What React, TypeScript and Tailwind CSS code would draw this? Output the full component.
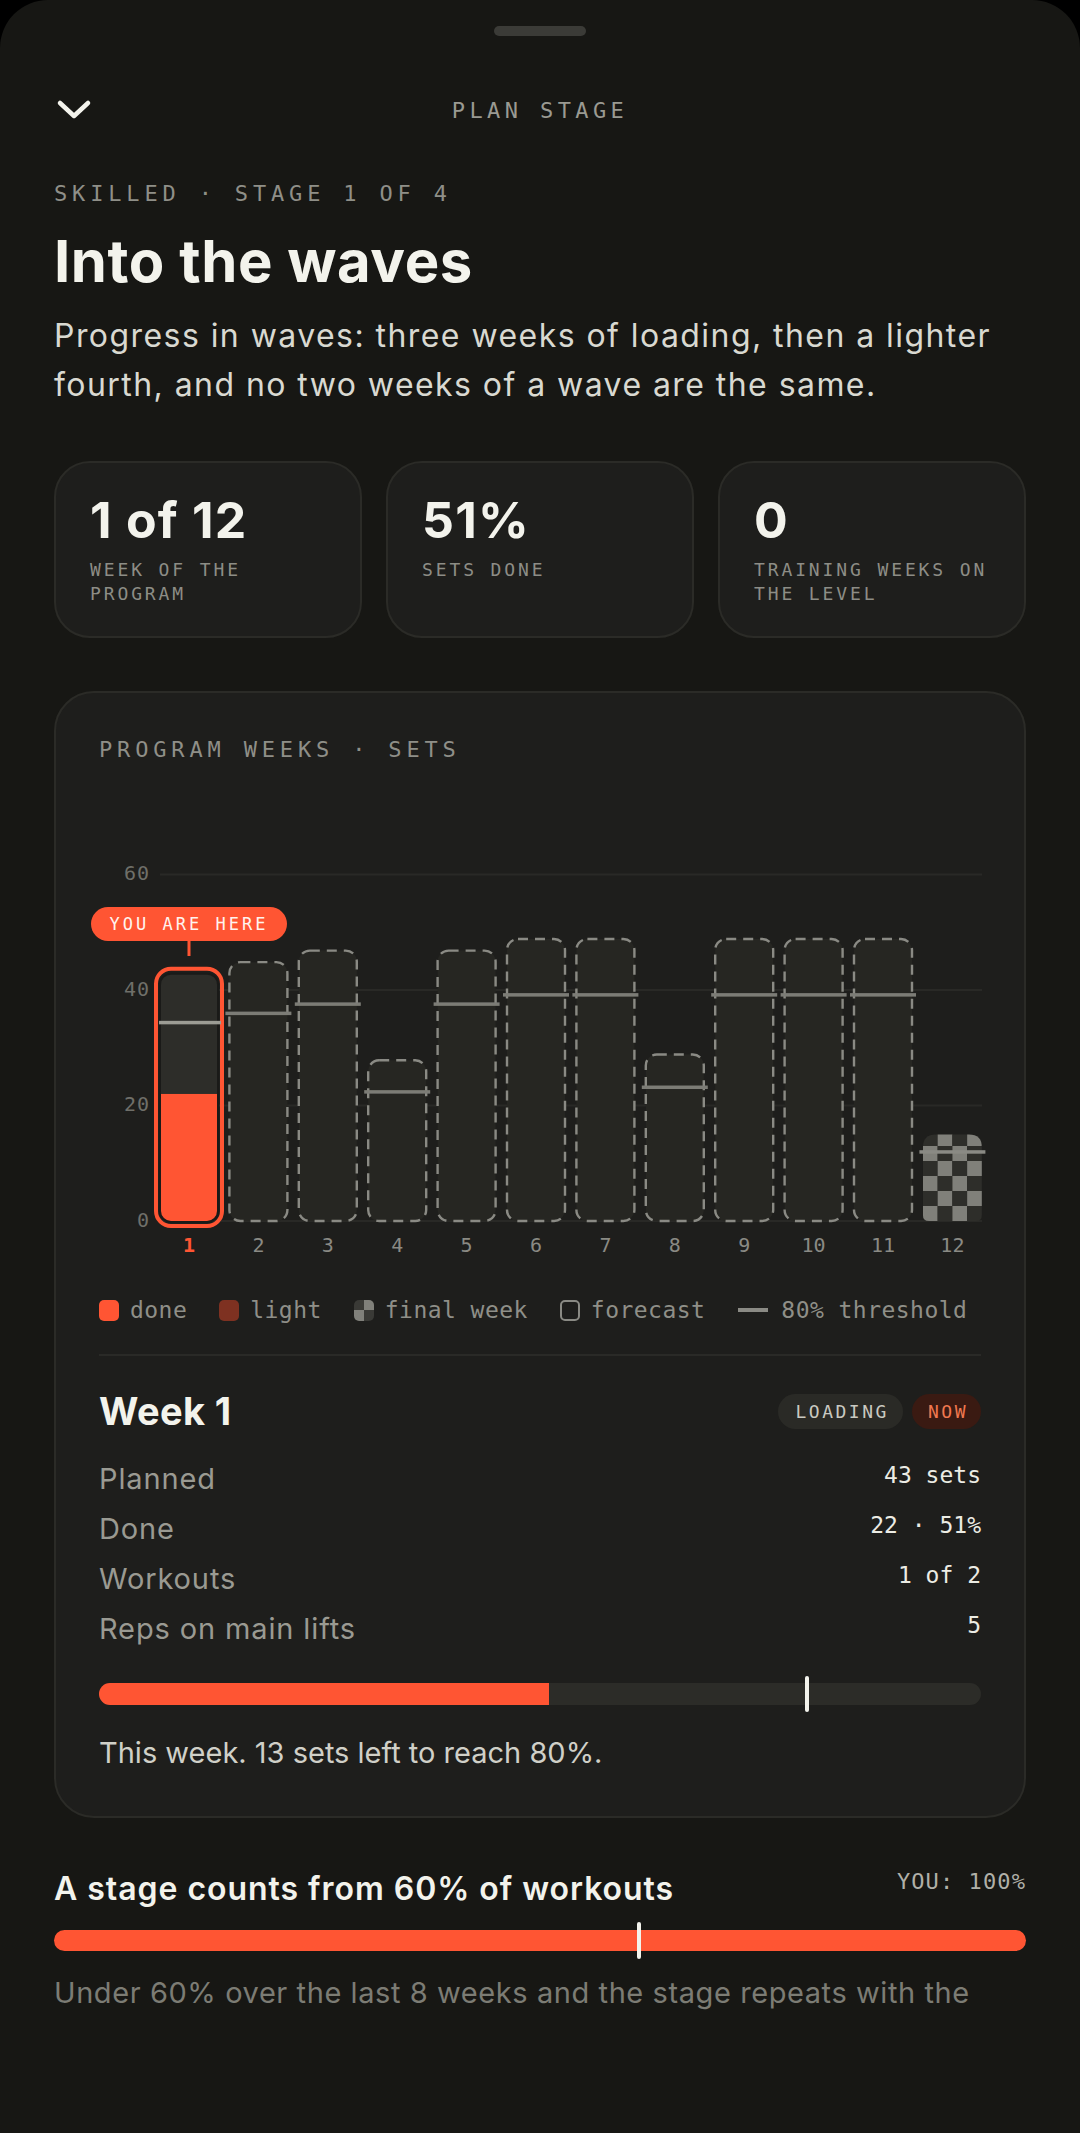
import React from "react";

const SANS = "font-['Inter','Noto_Sans',sans-serif]";
const MONO = "font-['DejaVu_Sans_Mono','Liberation_Mono',monospace]";

const ORANGE = "#ff5533";

const weeks = [
  { v: 43, kind: "current" },
  { v: 45, kind: "forecast" },
  { v: 47, kind: "forecast" },
  { v: 28, kind: "forecast" },
  { v: 47, kind: "forecast" },
  { v: 49, kind: "forecast" },
  { v: 49, kind: "forecast" },
  { v: 29, kind: "forecast" },
  { v: 49, kind: "forecast" },
  { v: 49, kind: "forecast" },
  { v: 49, kind: "forecast" },
  { v: 15, kind: "final" },
];

function Chart() {
  // svg origin = page (99, 860)
  const base = 361;
  const k = 5.775;
  const y = (v: number) => base - v * k;
  const cx = (i: number) => 90 + i * 69.4;
  const bw = 60;
  const mono = "DejaVu Sans Mono, Liberation Mono, monospace";
  return (
    <svg width="883" height="410" viewBox="0 0 883 410" overflow="visible" className="block">
      {[0, 20, 40, 60].map((g) => (
        <g key={g}>
          <line x1="61" x2="883" y1={y(g)} y2={y(g)} stroke="#292926" strokeWidth="2" />
          <text x="51" y={y(g)} textAnchor="end" dominantBaseline="middle" fill="#6f6f69" fontSize="20" fontFamily={mono} letterSpacing="1">
            {g}
          </text>
        </g>
      ))}
      {weeks.map((w, i) => {
        const c = cx(i);
        const top = y(w.v);
        const thr = y(w.v * 0.8);
        if (w.kind === "current") {
          const doneTop = y(22);
          return (
            <g key={i}>
              <rect x={c - 33} y={top - 4} width="66" height={base + 5 - top + 4} rx="15" fill="none" stroke={ORANGE} strokeWidth="4" />
              <clipPath id="cb1">
                <rect x={c - 29} y={top + 1} width="58" height={base - top} rx="11" />
              </clipPath>
              <g clipPath="url(#cb1)">
                <rect x={c - 29} y={top} width="58" height={base - top + 2} fill="#2d2d29" />
                <rect x={c - 29} y={doneTop} width="58" height={base - doneTop + 2} fill={ORANGE} />
              </g>
              <rect x={c - 29} y={top + 1} width="58" height={base - top} rx="11" fill="none" stroke="#1a1a18" strokeWidth="2" />
              <rect x={c - 30} y={thr - 1.5} width="62" height="3.5" fill="#9c9c94" />
              <line x1={c} x2={c} y1="80" y2="96" stroke={ORANGE} strokeWidth="3" />
              <rect x={c - 98} y="47" width="196" height="34" rx="17" fill={ORANGE} />
              <text x={c} y="65" textAnchor="middle" dominantBaseline="middle" fill="#fff3ee" fontSize="17" fontFamily={mono} letterSpacing="3">
                YOU ARE HERE
              </text>
            </g>
          );
        }
        if (w.kind === "final") {
          const x0 = c - 29.5;
          const cells: React.ReactNode[] = [];
          for (let r = 0; r < 6; r++) {
            for (let col = 0; col < 4; col++) {
              const light = (r + col) % 2 === 0;
              cells.push(
                <rect key={`${r}-${col}`} x={x0 + col * 14.75} y={base - (r + 1) * 15} width="14.75" height="15" fill={light ? "#80807a" : "#2e2e2a"} />
              );
            }
          }
          return (
            <g key={i}>
              <clipPath id="cb12">
                <path d={`M${x0} ${top + 13} Q${x0} ${top} ${x0 + 13} ${top} L${x0 + 46} ${top} Q${x0 + 59} ${top} ${x0 + 59} ${top + 13} L${x0 + 59} ${base - 6} Q${x0 + 59} ${base} ${x0 + 53} ${base} L${x0 + 6} ${base} Q${x0} ${base} ${x0} ${base - 6} Z`} />
              </clipPath>
              <g clipPath="url(#cb12)">{cells}</g>
              <rect x={c - 33} y={thr - 1.5} width="66" height="3.5" fill="#8a8a84" />
            </g>
          );
        }
        return (
          <g key={i}>
            <rect x={c - bw / 2 + 1} y={top + 1} width={bw - 2} height={base - top - 1} rx="11" fill="#262622" stroke="#8a8a84" strokeWidth="2.4" strokeDasharray="10 7" />
            <rect x={c - 33} y={thr - 1.5} width="66" height="3.5" fill="#7c7c76" />
          </g>
        );
      })}
      {weeks.map((_, i) => (
        <text
          key={i}
          x={cx(i)}
          y="386"
          textAnchor="middle"
          dominantBaseline="middle"
          fill={i === 0 ? ORANGE : "#8a8a84"}
          fontWeight={i === 0 ? 700 : 400}
          fontSize="20"
          fontFamily={mono}
        >
          {i + 1}
        </text>
      ))}
    </svg>
  );
}

function Stat({ value, label }: { value: string; label: React.ReactNode }) {
  return (
    <div className="h-[177px] rounded-[36px] border-2 border-[#2b2b27] bg-[#1e1e1c] pl-[34px] pr-[22px] pt-[28px]">
      <div className={`${SANS} text-[50px] font-bold leading-[58px] tracking-[0.025em] text-[#f3f3ec]`}>{value}</div>
      <div className={`${MONO} mt-[9px] text-[18px] leading-[24px] tracking-[0.16em] text-[#8d8d86]`}>{label}</div>
    </div>
  );
}

function Legend() {
  return (
    <div className={`${MONO} mt-[24px] flex items-center text-[23px] leading-[32px] tracking-[0.02em] text-[#8f8f88]`}>
      <span className="h-[21px] w-[20px] rounded-[5px] bg-[#ff5533]" />
      <span className="ml-[11px]">done</span>
      <span className="ml-[32px] h-[21px] w-[20px] rounded-[5px] bg-[#7e3121]" />
      <span className="ml-[11px]">light</span>
      <span className="ml-[32px] grid h-[21px] w-[20px] grid-cols-2 grid-rows-2 overflow-hidden rounded-[5px]">
        <span className="bg-[#3a3a36]" />
        <span className="bg-[#80807a]" />
        <span className="bg-[#80807a]" />
        <span className="bg-[#3a3a36]" />
      </span>
      <span className="ml-[11px]">final week</span>
      <span className="ml-[32px] h-[21px] w-[20px] rounded-[5px] border-2 border-[#8a8a84]" />
      <span className="ml-[11px]">forecast</span>
      <span className="ml-[33px] h-[4px] w-[30px] bg-[#8a8a84]" />
      <span className="ml-[13px]">80% threshold</span>
    </div>
  );
}

function Row({ label, value }: { label: string; value: string }) {
  return (
    <div className="flex items-start justify-between">
      <span className={`${SANS} text-[29px] leading-[40px] tracking-[0.03em] text-[#9a9a92]`}>{label}</span>
      <span className={`${MONO} text-[23px] leading-[32px] text-[#ecece4]`}>{value}</span>
    </div>
  );
}

export default function App() {
  return (
    <div className="min-h-screen bg-black">
      <div className="relative min-h-[2133px] overflow-hidden rounded-t-[48px] bg-[#171714]">
        <div className="flex justify-center pt-[26px]">
          <div className="h-[10px] w-[92px] rounded-full bg-[#3b3b37]" />
        </div>
        <div className="mt-[44px] flex h-[60px] items-center justify-between px-[54px]">
          <svg width="36" height="22" viewBox="0 0 36 22" className="ml-[2px]">
            <polyline points="4,4 18,17 32,4" fill="none" stroke="#f3f3ec" strokeWidth="4.5" strokeLinecap="round" strokeLinejoin="round" />
          </svg>
          <div className={`${MONO} text-[22px] tracking-[0.2em] text-[#9a9a92]`}>PLAN STAGE</div>
          <div className="w-[38px]" />
        </div>

        <div className="px-[54px]">
          <div className={`${MONO} mt-[37px] text-[22px] leading-[33px] tracking-[0.22em] text-[#8f8f88]`}>
            SKILLED · STAGE 1 OF 4
          </div>
          <h1 className={`${SANS} mt-[18px] text-[58px] font-bold leading-[66px] tracking-[0.01em] text-[#f3f3ec]`}>
            Into the waves
          </h1>
          <p className={`${SANS} mt-[17px] text-[32px] leading-[49px] tracking-[0.045em] text-[#d9d9d1]`}>
            Progress in waves: three weeks of loading, then a lighter fourth, and no two weeks of a wave are the same.
          </p>

          <div className="mt-[52px] grid grid-cols-3 gap-[24px]">
            <Stat value="1 of 12" label={<>WEEK OF THE<br />PROGRAM</>} />
            <Stat value="51%" label="SETS DONE" />
            <Stat value="0" label="TRAINING WEEKS ON THE LEVEL" />
          </div>

          <div className="mt-[53px] rounded-[40px] border-2 border-[#2b2b27] bg-[#1e1e1c] px-[43px] pb-[43px] pt-[40px]">
            <div className={`${MONO} text-[22px] leading-[33px] tracking-[0.22em] text-[#8f8f88]`}>PROGRAM WEEKS · SETS</div>
            <div className="mt-[94px]">
              <Chart />
            </div>
            <Legend />
            <div className="mt-[28px] h-[2px] bg-[#2a2a27]" />
            <div className="mt-[33px] flex items-center justify-between">
              <div className={`${SANS} text-[38px] font-bold leading-[44px] tracking-[0.01em] text-[#f3f3ec]`}>Week 1</div>
              <div className={`${MONO} flex items-center gap-[9px] text-[18px] tracking-[0.14em]`}>
                <span className="flex h-[35px] items-center rounded-full bg-[#2a2a26] pl-[17px] pr-[14px] text-[#c9c9c1]">LOADING</span>
                <span className="flex h-[35px] items-center rounded-full bg-[#3a1a12] pl-[16px] pr-[13px] text-[#f0784f]">NOW</span>
              </div>
            </div>
            <div className="mt-[26px] flex flex-col gap-[10px]">
              <Row label="Planned" value="43 sets" />
              <Row label="Done" value="22 · 51%" />
              <Row label="Workouts" value="1 of 2" />
              <Row label="Reps on main lifts" value="5" />
            </div>
            <div className="relative mt-[34px] h-[22px] rounded-full bg-[#2c2c28]">
              <div className="h-full w-[51%] rounded-l-full bg-[#ff5533]" />
              <div className="absolute left-[80%] top-[-7px] h-[36px] w-[4px] rounded-full bg-[#f3f3ec]" />
            </div>
            <p className={`${SANS} mt-[28px] text-[29px] leading-[40px] text-[#d0d0c8]`}>
              This week. 13 sets left to reach 80%.
            </p>
          </div>

          <div className="mt-[51px] flex items-start justify-between">
            <div className={`${SANS} text-[32px] font-semibold leading-[40px] tracking-[0.03em] text-[#f3f3ec]`}>A stage counts from 60% of workouts</div>
            <div className={`${MONO} -mt-[2px] text-[22px] leading-[30px] tracking-[0.05em] text-[#b0b0a8]`}>YOU: 100%</div>
          </div>
          <div className="relative mt-[21px] h-[21px] rounded-full bg-[#ff5533]">
            <div className="absolute left-[60%] top-[-8px] h-[37px] w-[4px] rounded-full bg-[#f3f3ec]" />
          </div>
          <p className={`${SANS} mt-[22px] text-[29px] leading-[40px] tracking-[0.02em] text-[#7c7c74]`}>
            Under 60% over the last 8 weeks and the stage repeats with the
          </p>
        </div>
      </div>
    </div>
  );
}
